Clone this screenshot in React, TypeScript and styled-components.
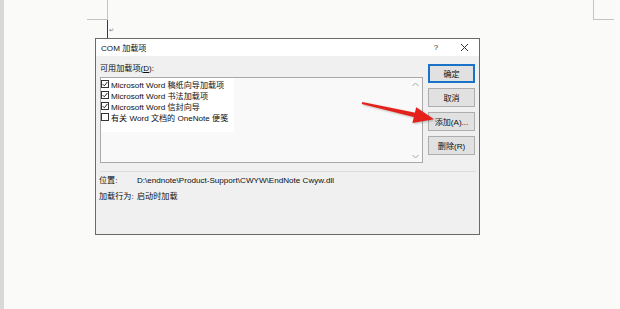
import styled, { createGlobalStyle } from "styled-components";

const GlobalStyle = createGlobalStyle`
  html, body {
    margin: 0;
    padding: 0;
    background: #fafaf9;
  }
  body {
    font-family: "Liberation Sans", "Noto Sans CJK SC", sans-serif;
    color: #0e0e0e;
  }
`;

const items = [
  { label: "Microsoft Word 稿纸向导加载项", checked: true },
  { label: "Microsoft Word 书法加载项", checked: true },
  { label: "Microsoft Word 信封向导", checked: true },
  { label: "有关 Word 文档的 OneNote 便笺", checked: false },
];

const buttons = [
  { label: "确定", focused: true },
  { label: "取消", focused: false },
  { label: "添加(A)...", focused: false },
  { label: "删除(R)", focused: false },
];

function App() {
  return (
    <Page>
      <GlobalStyle />
      <MarksRow>
        <CornerMark side="left" />
        <CornerMark side="right" />
      </MarksRow>
      <CursorRow>
        <Caret />
        <ReturnMark>↵</ReturnMark>
      </CursorRow>

      <Dialog>
        <TitleBar>
          <Title>COM 加载项</Title>
          <TitleButton>?</TitleButton>
          <TitleButton>
            <svg width="9" height="9" viewBox="0 0 9 9">
              <path d="M1 1 L8 8 M8 1 L1 8" stroke="#333" strokeWidth="1" />
            </svg>
          </TitleButton>
        </TitleBar>

        <Body>
          <TopSection>
            <LeftColumn>
              <FieldLabel>
                可用加载项(<u>D</u>):
              </FieldLabel>
              <ListBox>
                <ItemsPanel>
                  {items.map((item) => (
                    <Item key={item.label}>
                      <CheckBox>
                        {item.checked ? (
                          <svg width="6" height="6" viewBox="0 0 6 6">
                            <path
                              d="M0.6 3.1 L2.3 4.8 L5.4 1.0"
                              fill="none"
                              stroke="#222"
                              strokeWidth="1"
                            />
                          </svg>
                        ) : null}
                      </CheckBox>
                      <span>{item.label}</span>
                    </Item>
                  ))}
                </ItemsPanel>
                <ScrollBar>
                  <svg width="7" height="5" viewBox="0 0 7 5">
                    <path d="M0.5 4 L3.5 1 L6.5 4" fill="none" stroke="#a8a8a8" />
                  </svg>
                  <svg width="7" height="5" viewBox="0 0 7 5">
                    <path d="M0.5 1 L3.5 4 L6.5 1" fill="none" stroke="#a8a8a8" />
                  </svg>
                </ScrollBar>
              </ListBox>
            </LeftColumn>
            <ButtonColumn>
              {buttons.map((b) => (
                <DialogButton key={b.label} focused={b.focused}>
                  {b.label}
                </DialogButton>
              ))}
            </ButtonColumn>
          </TopSection>

          <Separator />

          <InfoGrid>
            <span>位置:</span>
            <span>D:\endnote\Product-Support\CWYW\EndNote Cwyw.dll</span>
            <span>加载行为:</span>
            <span>启动时加载</span>
          </InfoGrid>
        </Body>
      </Dialog>

      <Arrow width="78" height="30" viewBox="0 0 78 30">
        <polygon points="2.2,2.0 55.4,12.8 54.6,17.2 1.8,4.0" fill="#e5211b" />
        <polygon points="56.2,7.2 74,19.2 52.4,23.0" fill="#e5211b" />
      </Arrow>
    </Page>
  );
}

const Page = styled.div`
  position: relative;
  height: 309px;
  border-left: 4px solid #d8d8d8;
  box-sizing: border-box;
  overflow: hidden;
`;

// document corner marks

const MarksRow = styled.div`
  display: flex;
  height: 20px;
  padding: 0 6px 0 83px;
`;

const CornerMark = styled.div<{ side: "left" | "right" }>`
  width: 21px;
  height: 20px;
  box-sizing: border-box;
  border-bottom: 1px solid #c4c4c4;
  ${({ side }) =>
    side === "left"
      ? "border-right: 1px solid #c4c4c4;"
      : "border-left: 1px solid #c4c4c4; margin-left: auto;"}
`;

const CursorRow = styled.div`
  display: flex;
  align-items: center;
  height: 18px;
  margin-left: 103px;
`;

const Caret = styled.div`
  width: 1px;
  height: 18px;
  background: #3a3a3a;
`;

const ReturnMark = styled.span`
  font-size: 6px;
  color: #777;
  margin-left: 1px;
`;

// dialog

const Dialog = styled.div`
  width: 385px;
  height: 197px;
  margin-left: 91px;
  box-sizing: border-box;
  border: 1px solid #6a6a6a;
  background: #f0f0f0;
  display: flex;
  flex-direction: column;
  font-size: 8.1px;
`;

const TitleBar = styled.div`
  display: flex;
  align-items: center;
  height: 17px;
  background: #ffffff;
  padding: 0 1px 0 5px;
`;

const Title = styled.span`
  flex: 1;
  font-size: 8.1px;
`;

const TitleButton = styled.div`
  width: 28px;
  height: 17px;
  display: flex;
  align-items: center;
  justify-content: center;
  font-size: 8px;
  color: #333;
`;

const Body = styled.div`
  display: flex;
  flex-direction: column;
  padding: 8px 0 0 0;
`;

const TopSection = styled.div`
  display: grid;
  grid-template-columns: 323px 47px;
  column-gap: 5px;
  padding: 0 4px;
`;

const LeftColumn = styled.div`
  display: flex;
  flex-direction: column;
`;

const FieldLabel = styled.div`
  height: 10px;
  line-height: 10px;
  margin-bottom: 3px;
`;

const ListBox = styled.div`
  display: flex;
  height: 86px;
  box-sizing: border-box;
  border: 1px solid #a9a9a9;
  background: #f9f9f9;
`;

const ItemsPanel = styled.div`
  width: 133px;
  height: 53px;
  background: #ffffff;
  display: flex;
  flex-direction: column;
  padding-top: 0.5px;
`;

const Item = styled.div`
  display: flex;
  align-items: center;
  gap: 2px;
  height: 11px;
  white-space: nowrap;
`;

const CheckBox = styled.div`
  width: 8px;
  height: 8px;
  box-sizing: border-box;
  border: 1px solid #333;
  background: #fff;
  display: flex;
  align-items: center;
  justify-content: center;
  flex-shrink: 0;
`;

const ScrollBar = styled.div`
  margin-left: auto;
  width: 13px;
  display: flex;
  flex-direction: column;
  align-items: center;
  justify-content: space-between;
  padding: 4px 0 3px;
`;

const ButtonColumn = styled.div`
  display: flex;
  flex-direction: column;
  gap: 5px;
`;

const DialogButton = styled.div<{ focused: boolean }>`
  height: 19px;
  box-sizing: border-box;
  display: flex;
  align-items: center;
  justify-content: center;
  background: #e1e1e1;
  border: 1px solid ${({ focused }) => (focused ? "#1a72c9" : "#adadad")};
  box-shadow: ${({ focused }) => (focused ? "inset 0 0 0 1px #1a72c9" : "none")};
  white-space: nowrap;
`;

const Separator = styled.div`
  height: 1px;
  background: #dcdcdc;
  margin: 8px 3px 0 4px;
`;

const InfoGrid = styled.div`
  display: grid;
  grid-template-columns: 38px auto;
  row-gap: 5px;
  padding: 3px 0 0 3px;
  line-height: 11px;
  white-space: nowrap;
`;

const Arrow = styled.svg`
  position: absolute;
  left: 356px;
  top: 100px;
  filter: drop-shadow(1px 1px 1px rgba(0, 0, 0, 0.25));
`;

export default App;
